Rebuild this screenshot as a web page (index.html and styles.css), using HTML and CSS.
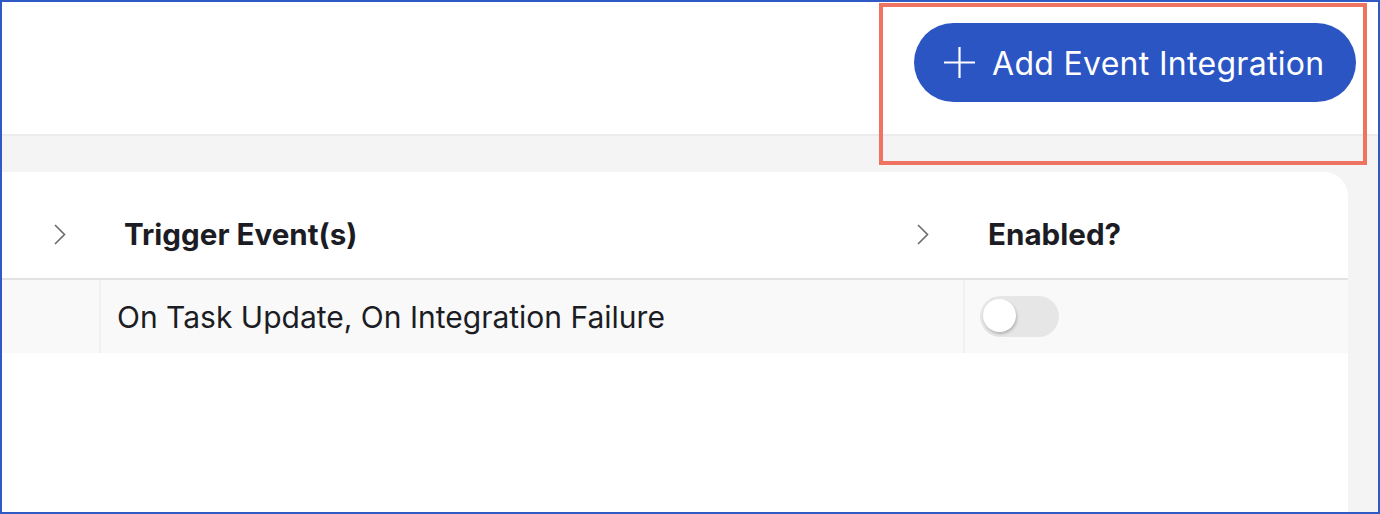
FILE: index.html
```html
<!DOCTYPE html>
<html lang="en">
<head>
  <meta charset="utf8"/>
  <title>Event Integrations</title>
  <link rel="stylesheet" href="styles.css">
</head>
<body>
  <div class="frame">
    <div class="topbar">
      <button class="btn-add">
        <svg width="33" height="33" viewBox="0 0 33 33"><path d="M16.5 1v31M1 16.5h31" stroke="#fff" stroke-width="2.2" fill="none"/></svg>
        <span>Add Event Integration</span>
      </button>
    </div>
    <div class="highlight"></div>
    <div class="content">
      <div class="card">
        <div class="row head">
          <div class="cell"><svg class="chev" width="12" height="21" viewBox="0 0 12 21"><polyline points="1,1 10.5,10.5 1,20" fill="none" stroke="#6a6a6a" stroke-width="1.6"/></svg></div>
          <div class="cell"><span>Trigger Event(s)</span><svg class="chev" width="12" height="21" viewBox="0 0 12 21"><polyline points="1,1 10.5,10.5 1,20" fill="none" stroke="#6a6a6a" stroke-width="1.6"/></svg></div>
          <div class="cell"><span>Enabled?</span></div>
        </div>
        <div class="row data">
          <div class="cell"></div>
          <div class="cell">On Task Update, On Integration Failure</div>
          <div class="cell toggle-cell"><div class="toggle"><div class="knob"></div></div></div>
        </div>
      </div>
    </div>
  </div>
</body>
</html>
```

FILE: styles.css
```css
html, body { margin: 0; padding: 0; }
body { font-family: Inter, "Noto Sans", sans-serif; color: #1c1d24; background: #fff; }
.frame {
  position: relative; box-sizing: border-box; width: 1380px; height: 514px;
  border: 2px solid #2f59c4; display: flex; flex-direction: column; overflow: hidden;
}
.topbar {
  height: 134px; border-bottom: 2px solid #ececec; display: flex; justify-content: flex-end;
  align-items: flex-start; padding: 21px 22px 0 0; box-sizing: border-box; flex: none;
}
.btn-add {
  height: 79px; width: 442px; border: none; border-radius: 40px; background: #2c55c4; color: #fff;
  display: flex; align-items: center; gap: 16px; padding: 0 0 0 29px; box-sizing: border-box;
  font-family: Inter, sans-serif; font-size: 32px; font-weight: 400; letter-spacing: 0.3px;
}
.btn-add span { margin-top: 2px; }
.btn-add svg { flex: none; }
.highlight {
  position: absolute; left: 877px; top: 1px; width: 488px; height: 162px; box-sizing: border-box;
  border: 4px solid #ef7361;
}
.content { flex: 1; background: #f4f4f4; padding: 36px 30px 0 0; display: flex; }
.card { flex: 1; background: #fff; border-top-right-radius: 24px; }
.row { display: grid; grid-template-columns: 97px 864px 1fr; }
.head { height: 106px; border-bottom: 2px solid #e2e2e2; }
.head .cell {
  display: flex; align-items: center; justify-content: space-between;
  padding: 18px 34px 0 25px; font-size: 29.6px; font-weight: 700;
}
.head .cell:first-child { justify-content: flex-end; padding: 18px 33px 0 0; }
.chev { flex: none; }
.data { height: 73px; background: #f9f9f9; }
.data .cell {
  display: flex; align-items: center; padding: 0 16px; font-size: 30px; font-weight: 400;
  border-left: 2px solid #f0f0f0;
}
.data .cell:first-child { border-left: none; }
.data .toggle-cell { padding: 0 15px; }
.toggle {
  width: 79px; height: 41px; border-radius: 21px; background: #e6e6e6; position: relative;
  box-sizing: border-box; padding: 3px;
}
.knob {
  width: 33px; height: 33px; border-radius: 50%; background: #fff;
  box-shadow: 1px 2px 3px rgba(0,0,0,0.22);
}
```
